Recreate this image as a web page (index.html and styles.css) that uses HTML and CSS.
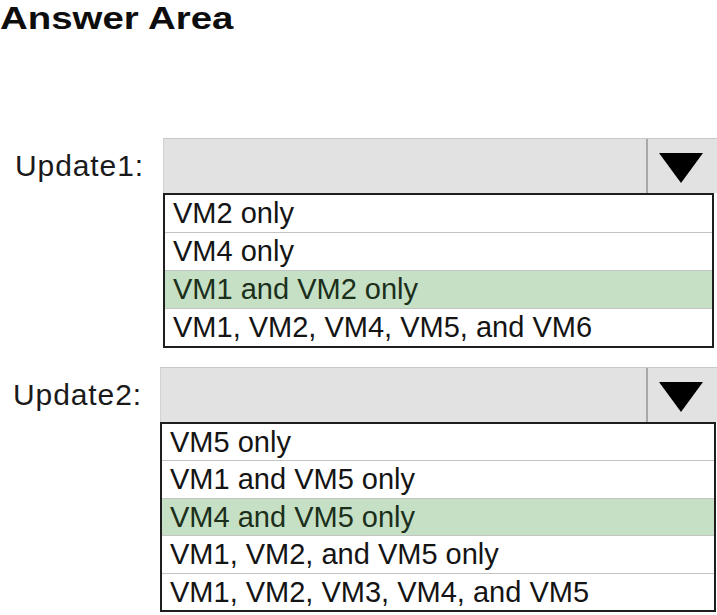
FILE: index.html
```html
<!DOCTYPE html>
<html lang="en">
<head>
<meta charset="utf-8">
<title>Answer Area</title>
<link rel="stylesheet" href="styles.css">
</head>
<body>
<main class="page">
  <h1 class="title">Answer Area</h1>

  <section class="question">
    <div class="label">Update1:</div>
    <div class="field">
      <div class="select">
        <div class="select-value"></div>
        <div class="select-button">
          <svg class="arrow" viewBox="0 0 44 30" width="44" height="30"><polygon points="0,0 44,0 22,30" fill="#000"/></svg>
        </div>
      </div>
      <ul class="options">
        <li class="option">VM2 only</li>
        <li class="option">VM4 only</li>
        <li class="option option--selected">VM1 and VM2 only</li>
        <li class="option">VM1, VM2, VM4, VM5, and VM6</li>
      </ul>
    </div>
  </section>

  <section class="question question--second">
    <div class="label">Update2:</div>
    <div class="field">
      <div class="select">
        <div class="select-value"></div>
        <div class="select-button">
          <svg class="arrow" viewBox="0 0 44 30" width="44" height="30"><polygon points="0,0 44,0 22,30" fill="#000"/></svg>
        </div>
      </div>
      <ul class="options options--compact">
        <li class="option">VM5 only</li>
        <li class="option">VM1 and VM5 only</li>
        <li class="option option--selected">VM4 and VM5 only</li>
        <li class="option">VM1, VM2, and VM5 only</li>
        <li class="option">VM1, VM2, VM3, VM4, and VM5</li>
      </ul>
    </div>
  </section>
</main>
</body>
</html>
```

FILE: styles.css
```css
html, body {
  margin: 0;
  padding: 0;
  background: #ffffff;
}

body {
  font-family: "Liberation Sans", Arial, sans-serif;
  color: #111111;
  width: 717px;
  height: 615px;
  overflow: hidden;
}

.page {
  display: flex;
  flex-direction: column;
}

.title {
  margin: 0 0 102px 0;
  font-size: 32px;
  font-weight: bold;
  line-height: 36px;
  height: 36px;
  color: #0d0d0d;
  transform: scaleX(1.2);
  transform-origin: left center;
  align-self: flex-start;
}

.question {
  display: grid;
  grid-template-columns: 148px 554px;
  padding-left: 15px;
  align-items: start;
}

.question--second {
  margin-top: 19px;
  margin-left: -2px;
  grid-template-columns: 147px 557px;
}

.label {
  height: 55px;
  display: flex;
  align-items: center;
  font-size: 30px;
  letter-spacing: 0.9px;
  color: #1a1a1a;
}

.field {
  display: flex;
  flex-direction: column;
}

.select {
  display: flex;
  height: 55px;
  background: #e2e2e2;
  border-top: 1px solid #c8c8c8;
  border-left: 1px solid #d2d2d2;
  box-sizing: border-box;
}

.select-value {
  flex: 1;
}

.select-button {
  width: 71px;
  border-left: 2px solid #a8a8a8;
  display: flex;
  justify-content: center;
  padding-top: 14px;
  box-sizing: border-box;
}

.arrow {
  display: block;
  margin-left: -4px;
}

.options {
  list-style: none;
  margin: 0;
  padding: 0;
  width: 551px;
  box-sizing: border-box;
  border: 2px solid #1e1e1e;
}

.option {
  height: 37px;
  line-height: 37px;
  padding-left: 8px;
  font-size: 29px;
  color: #141414;
  white-space: nowrap;
}

.option + .option {
  border-top: 1px solid #c4c4c4;
}

.option--selected {
  background: #c5e0c4;
  color: #1b2f1b;
}

.options--compact {
  width: 556px;
}

.options--compact .option {
  height: 36.4px;
  line-height: 36.4px;
}
```
